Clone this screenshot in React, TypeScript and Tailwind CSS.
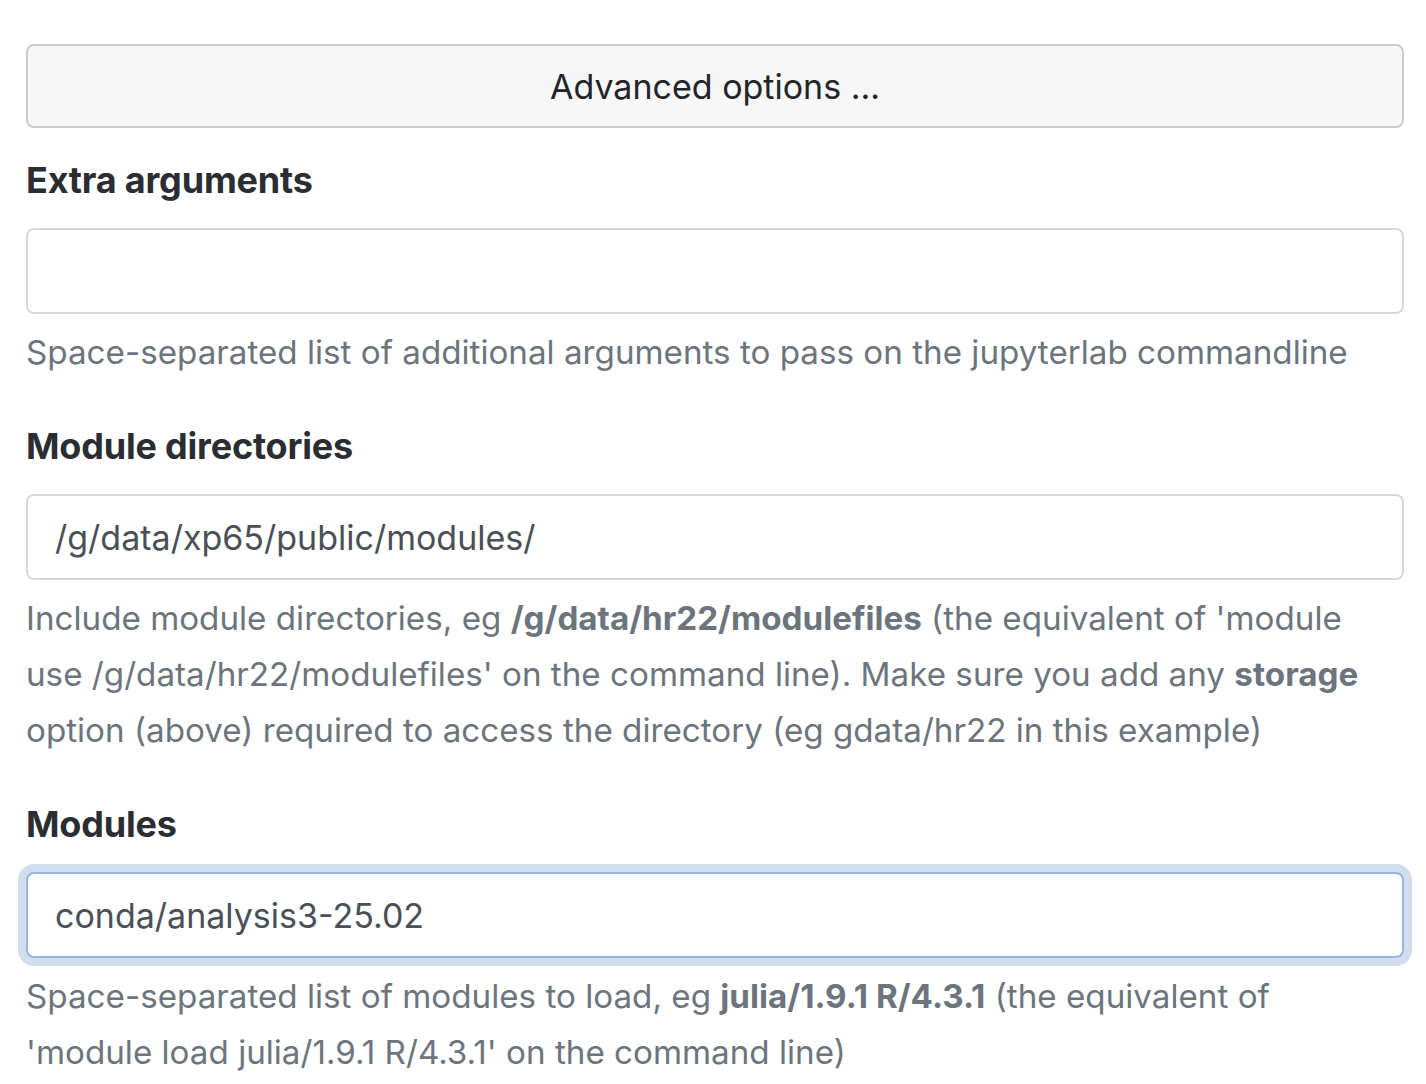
import { useState } from "react";

const font = { fontFamily: "Inter, 'Noto Sans', 'Liberation Sans', sans-serif" };

function Field({
  label,
  value,
  focused,
  children,
}: {
  label: string;
  value: string;
  focused?: boolean;
  children: React.ReactNode;
}) {
  const [v, setV] = useState(value);
  return (
    <div className="mb-[42px]">
      <label className="block text-[36px] leading-[48px] font-bold text-[#2a2d31] mb-[24px] tracking-[-0.2px]">
        {label}
      </label>
      <input
        value={v}
        onChange={(e) => setV(e.target.value)}
        className={`block w-full h-[86px] rounded-[8px] border-2 bg-white px-[27px] text-[34px] text-[#495057] outline-none ${
          focused
            ? "border-[#94b5dc] shadow-[0_0_0_8px_#d2deed]"
            : "border-[#d5d9dd]"
        }`}
      />
      <div className="mt-[10px] text-[33.2px] leading-[56px] text-[#6c757d] whitespace-nowrap">
        {children}
      </div>
    </div>
  );
}

export default function App() {
  return (
    <div className="bg-white min-h-screen pl-[26px] pr-[22px] pt-[44px]" style={font}>
      <button className="block w-full h-[84px] rounded-[8px] border-2 border-[#cccccc] bg-[#f7f7f7] text-[34px] text-[#212529] mb-[28px]">
        Advanced options ...
      </button>

      <Field label="Extra arguments" value="">
        Space-separated list of additional arguments to pass on the jupyterlab commandline
      </Field>

      <Field label="Module directories" value="/g/data/xp65/public/modules/">
        Include module directories, eg <b>/g/data/hr22/modulefiles</b> (the equivalent of 'module
        <br />
        use /g/data/hr22/modulefiles' on the command line). Make sure you add any <b>storage</b>
        <br />
        option (above) required to access the directory (eg gdata/hr22 in this example)
      </Field>

      <Field label="Modules" value="conda/analysis3-25.02" focused>
        Space-separated list of modules to load, eg <b>julia/1.9.1 R/4.3.1</b> (the equivalent of
        <br />
        'module load julia/1.9.1 R/4.3.1' on the command line)
      </Field>
    </div>
  );
}
